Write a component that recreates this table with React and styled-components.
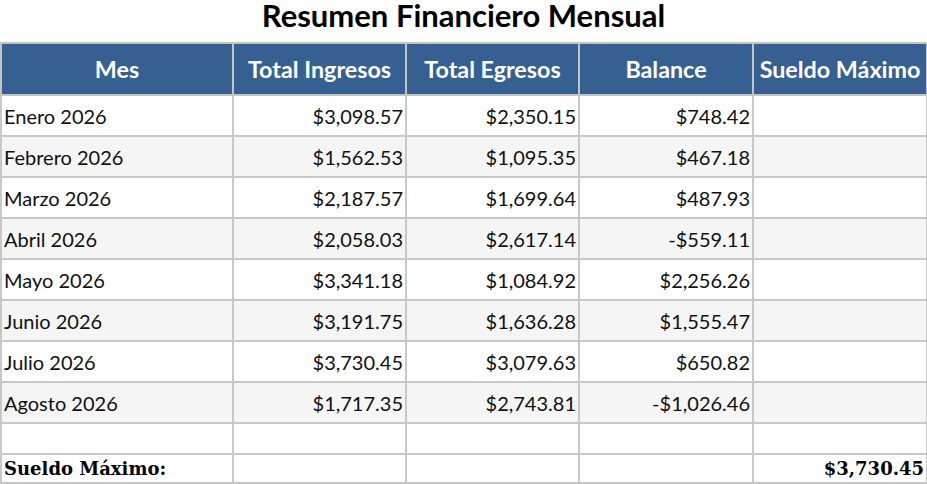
import styled, { createGlobalStyle } from 'styled-components'

const GlobalStyle = createGlobalStyle`
  body {
    margin: 0;
    background: #fff;
    font-family: Lato, 'Open Sans', sans-serif;
  }
`

const Title = styled.h2`
  margin: 0;
  height: 42px;
  font-size: 31px;
  font-weight: 700;
  line-height: 30px;
  text-align: center;
  color: #000;
`

const Table = styled.table`
  width: 926px;
  border-collapse: collapse;
  table-layout: fixed;
  font-size: 20px;
  color: #111;
`

const Th = styled.th`
  height: 50px;
  padding: 0 2px;
  background: #366092;
  color: #fff;
  font-weight: 700;
  font-size: 23.3px;
  text-align: center;
  border: 2px solid #c4c4c4;
  white-space: nowrap;
`

const Row = styled.tr`
  height: ${(p) => p.$h || 41}px;
  background: ${(p) => (p.$alt ? '#f5f5f5' : '#fff')};
`

const Td = styled.td`
  padding: 0 2px;
  border: 2px solid #c8c8c8;
  text-align: ${(p) => (p.$num ? 'right' : 'left')};
  white-space: nowrap;
`

const TotalCell = styled(Td)`
  font-family: 'DejaVu Serif', 'Liberation Serif', serif;
  font-weight: 700;
  font-size: 18px;
  letter-spacing: 0;
  color: #000;
`

const rows = [
  ['Enero 2026', '$3,098.57', '$2,350.15', '$748.42'],
  ['Febrero 2026', '$1,562.53', '$1,095.35', '$467.18'],
  ['Marzo 2026', '$2,187.57', '$1,699.64', '$487.93'],
  ['Abril 2026', '$2,058.03', '$2,617.14', '-$559.11'],
  ['Mayo 2026', '$3,341.18', '$1,084.92', '$2,256.26'],
  ['Junio 2026', '$3,191.75', '$1,636.28', '$1,555.47'],
  ['Julio 2026', '$3,730.45', '$3,079.63', '$650.82'],
  ['Agosto 2026', '$1,717.35', '$2,743.81', '-$1,026.46'],
]

export default function App() {
  return (
    <>
      <GlobalStyle />
      <Title>Resumen Financiero Mensual</Title>
      <Table>
        <colgroup>
          <col style={{ width: 232 }} />
          <col style={{ width: 173 }} />
          <col style={{ width: 173 }} />
          <col style={{ width: 174 }} />
          <col style={{ width: 174 }} />
        </colgroup>
        <thead>
          <tr>
            <Th>Mes</Th>
            <Th>Total Ingresos</Th>
            <Th>Total Egresos</Th>
            <Th>Balance</Th>
            <Th>Sueldo Máximo</Th>
          </tr>
        </thead>
        <tbody>
          {rows.map((r, i) => (
            <Row key={r[0]} $alt={i % 2 === 1}>
              <Td>{r[0]}</Td>
              <Td $num>{r[1]}</Td>
              <Td $num>{r[2]}</Td>
              <Td $num>{r[3]}</Td>
              <Td />
            </Row>
          ))}
          <Row $h={31}>
            <Td />
            <Td />
            <Td />
            <Td />
            <Td />
          </Row>
          <Row $h={29}>
            <TotalCell>Sueldo Máximo:</TotalCell>
            <Td />
            <Td />
            <Td />
            <TotalCell $num>$3,730.45</TotalCell>
          </Row>
        </tbody>
      </Table>
    </>
  )
}
